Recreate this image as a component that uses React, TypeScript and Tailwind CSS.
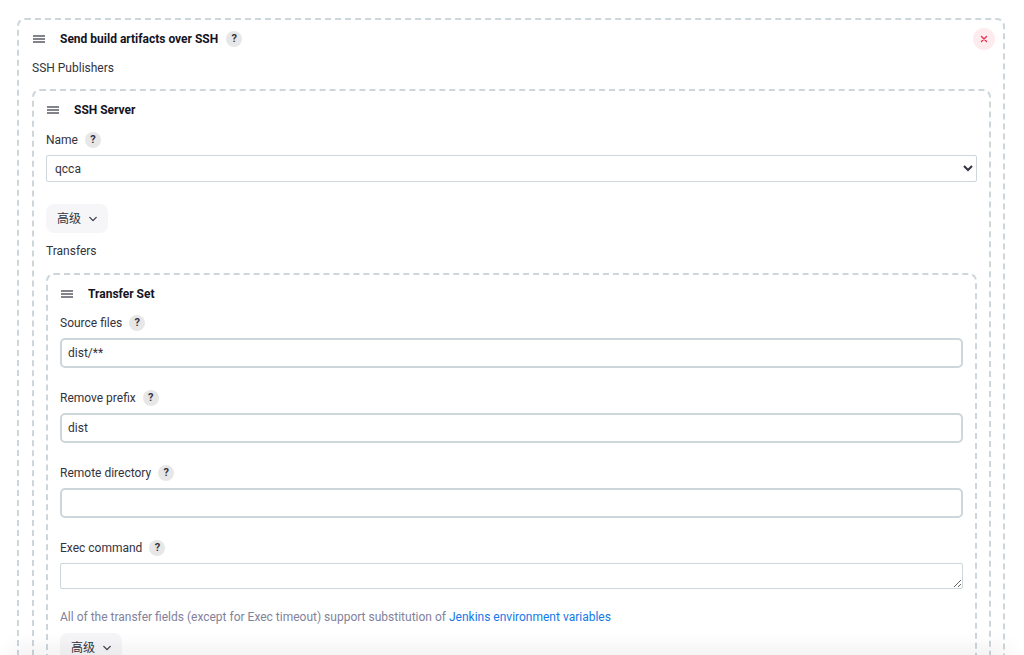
import React, { useState } from 'react';

const DragHandle = () => (
  <svg viewBox="0 0 14 14" fill="none" className="h-[14px] w-[14px] shrink-0" aria-hidden="true">
    <path d="M1 4H13M1 7H13M1 10H13" stroke="#5b5b66" strokeWidth="1.5" />
  </svg>
);

const HelpButton: React.FC<{ topic: string }> = ({ topic }) => (
  <button
    type="button"
    aria-label={`Help for ${topic}`}
    className="flex h-4 w-4 shrink-0 items-center justify-center rounded-full bg-[#e7e7e8] text-[11px] leading-4 font-bold text-[#333340]"
  >
    ?
  </button>
);

const AdvancedButton = () => (
  <button
    type="button"
    className="flex h-[29px] items-center gap-2 rounded-lg bg-[#f6f6f9] px-[11px] text-[12px] text-[#333340]"
  >
    高级
    <svg viewBox="0 0 8 8" fill="none" className="h-2 w-2" aria-hidden="true">
      <path d="M0.8 2.4L4 5.6L7.2 2.4" stroke="#3c3c48" strokeWidth="1.3" strokeLinecap="round" strokeLinejoin="round" />
    </svg>
  </button>
);

interface BlockProps {
  title: string;
  help?: boolean;
  onRemove?: () => void;
  className?: string;
  children: React.ReactNode;
}

const Block: React.FC<BlockProps> = ({ title, help, onRemove, className = '', children }) => (
  <section className={`rounded-lg border-2 border-dashed border-[#cdd6db] pt-2 pr-3 pb-4 ${className}`}>
    <header className="flex h-[22px] items-center">
      <DragHandle />
      <h2 className="ml-[14px] text-[12px] leading-[18px] font-bold text-[#14141f]">{title}</h2>
      {help && (
        <div className="ml-2">
          <HelpButton topic={title} />
        </div>
      )}
      {onRemove && (
        <button
          type="button"
          aria-label={`Remove ${title}`}
          onClick={onRemove}
          className="-mr-1 ml-auto flex h-[22px] w-[22px] items-center justify-center rounded-full bg-[#fdebed]"
        >
          <svg viewBox="0 0 8 8" fill="none" className="h-2 w-2" aria-hidden="true">
            <path d="M1.5 1.5L6.5 6.5M6.5 1.5L1.5 6.5" stroke="#e6304f" strokeWidth="1.4" strokeLinecap="round" />
          </svg>
        </button>
      )}
    </header>
    {children}
  </section>
);

interface FieldProps {
  id: string;
  label: string;
  children: React.ReactNode;
}

const Field: React.FC<FieldProps> = ({ id, label, children }) => (
  <div>
    <div className="mb-[6px] flex h-[18px] items-center gap-[7px]">
      <label htmlFor={id}>{label}</label>
      <HelpButton topic={label} />
    </div>
    {children}
  </div>
);

const textFields = [
  { id: 'source-files', label: 'Source files', value: 'dist/**' },
  { id: 'remove-prefix', label: 'Remove prefix', value: 'dist' },
  { id: 'remote-directory', label: 'Remote directory', value: '' },
];

const App: React.FC = () => {
  const [removed, setRemoved] = useState(false);

  return (
    <main className="h-screen overflow-hidden bg-white pt-[18px] pr-[19px] pl-[17px] font-['Roboto','Noto_Sans_CJK_SC',sans-serif] text-[12px] leading-[18px] text-[#333340]">
      {!removed && (
        <Block title="Send build artifacts over SSH" help onRemove={() => setRemoved(true)} className="pl-[13px]">
          <p className="mt-[9px] mb-3">SSH Publishers</p>

          <Block title="SSH Server" className="pl-3">
            <div className="mt-[10px]">
              <Field id="server-name" label="Name">
                <select
                  id="server-name"
                  className="block h-[27px] w-full rounded-[2px] border border-[#cdd6db] bg-white pl-1 text-[12px]"
                >
                  <option>qcca</option>
                </select>
              </Field>
            </div>

            <div className="mt-[22px]">
              <AdvancedButton />
            </div>
            <p className="mt-[9px] mb-[13px]">Transfers</p>

            <Block title="Transfer Set" className="pl-3">
              <div className="mt-[9px] flex flex-col gap-[21px]">
                {textFields.map(({ id, label, value }) => (
                  <Field key={id} id={id} label={label}>
                    <input
                      id={id}
                      type="text"
                      defaultValue={value}
                      className="block h-[30px] w-full rounded-[5px] border-2 border-[#cdd6db] bg-white px-[6px] text-[12px]"
                    />
                  </Field>
                ))}
                <Field id="exec-command" label="Exec command">
                  <textarea
                    id="exec-command"
                    className="block h-[26px] w-full rounded-[2px] border border-[#cdd6db] bg-white px-[7px] py-[3px] text-[12px]"
                  />
                </Field>
              </div>

              <p className="mt-[19px] mb-[7px] text-[#82829b]">
                All of the transfer fields (except for Exec timeout) support substitution of{' '}
                <a href="#environment" className="text-[#1479e8]">
                  Jenkins environment variables
                </a>
              </p>
              <AdvancedButton />
            </Block>
          </Block>
        </Block>
      )}

      {/* Shade cast by the sticky save bar */}
      <div className="pointer-events-none fixed right-5 bottom-0 left-4 h-0 shadow-[0_0_20px_5px_rgba(0,0,0,0.1)]" />
    </main>
  );
};

export default App;
